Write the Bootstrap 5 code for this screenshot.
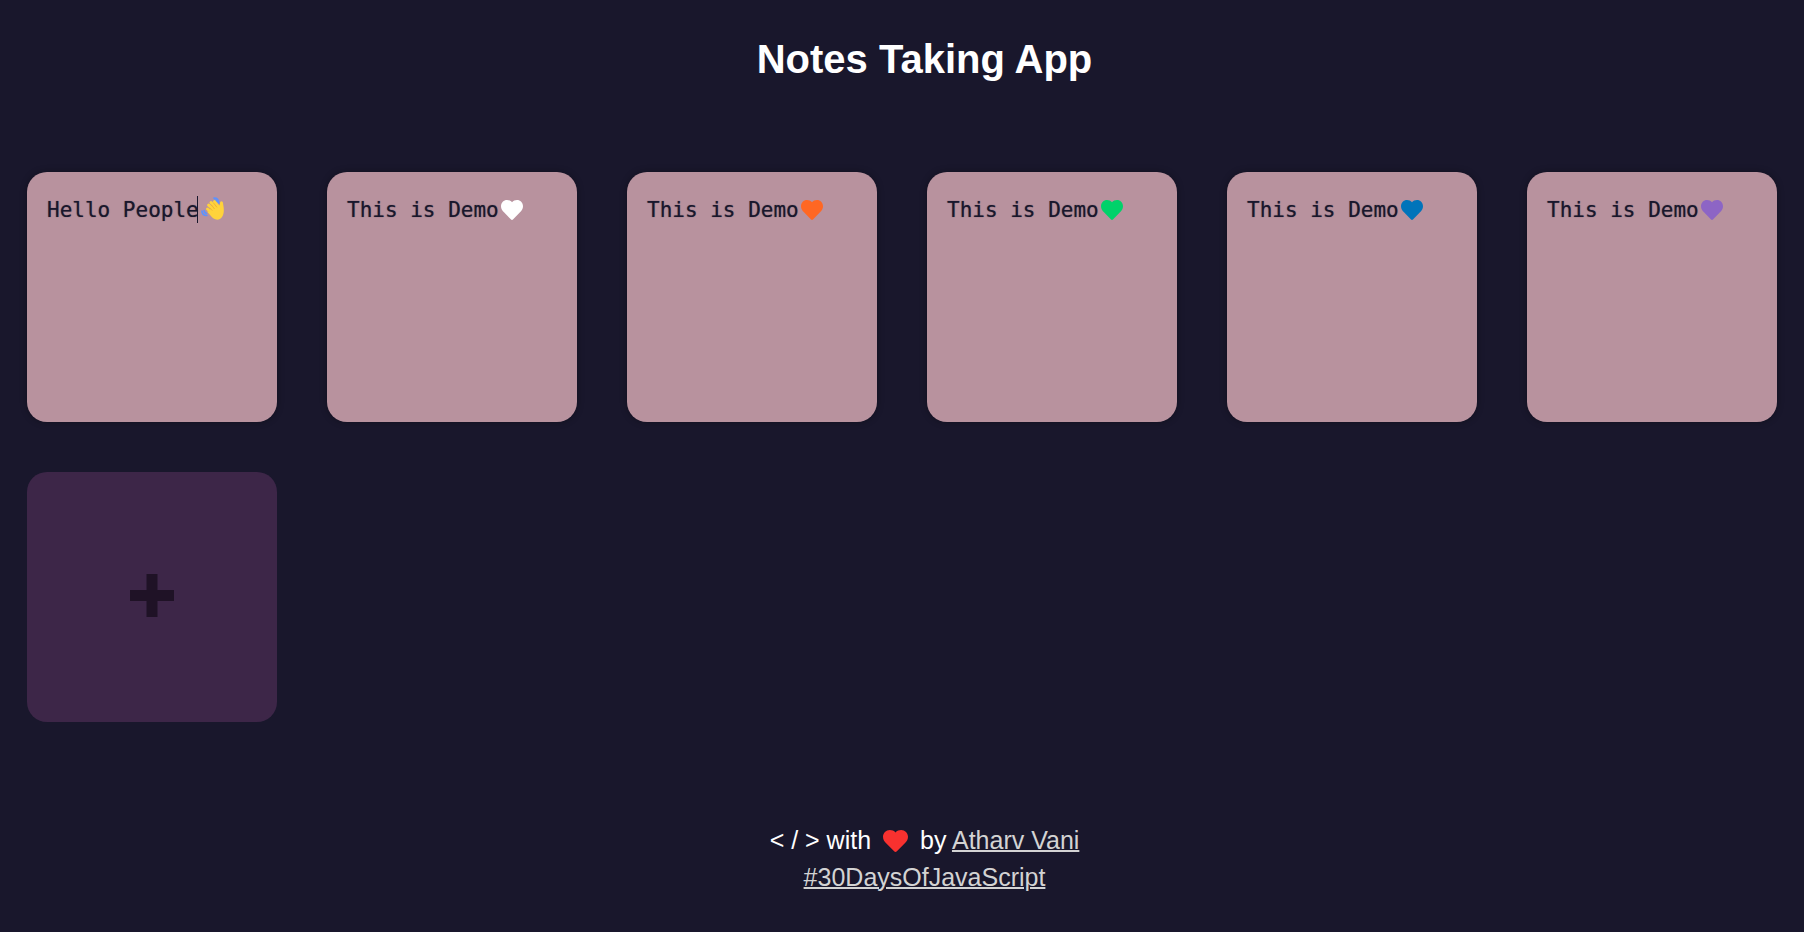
<!DOCTYPE html>
<html lang="en">
<head>
<meta charset="utf-8">
<meta name="viewport" content="width=device-width, initial-scale=1">
<title>Notes Taking App</title>
<link href="https://cdn.jsdelivr.net/npm/bootstrap@5.3.0/dist/css/bootstrap.min.css" rel="stylesheet">
<style>
  body { background: #19172c; color: #fff; font-family: "Liberation Sans", Arial, sans-serif; }
  .page-title { font-size: 40px; line-height: 46px; padding: 36px 0 0 45px; margin-bottom: 90px; }
  .notes { display: grid; grid-template-columns: repeat(auto-fill, 250px); gap: 50px; justify-content: center; }
  .note, .add-note { height: 250px; border-radius: 20px; }
  .note { background: #b8929e; box-shadow: 0 0 7px rgba(0, 0, 0, .33); }
  .note-text { background: transparent; color: #19172c; font: 21px/27px "DejaVu Sans Mono", monospace; text-shadow: 0 0 1px rgba(25, 23, 44, .6); padding: 25px 20px; resize: none; outline: 0; border-radius: 20px; }
  .emoji { left: 174px; top: 28px; pointer-events: none; }
  .wave { top: 25px; }
  .caret { left: 170px; top: 24px; width: 1px; height: 27px; background: #19172c; }
  .add-note { background: #3d2648; color: #1f1226; padding: 0 0 3px; }
  .page-footer { font-size: 25px; line-height: 37px; padding: 100px 0 32px 45px; }
  .page-footer a { color: #d3d3d3; text-decoration-thickness: 2px; }
  .love { margin: 0 5px; vertical-align: -3px; }
</style>
<script src="https://cdn.jsdelivr.net/npm/bootstrap@5.3.0/dist/js/bootstrap.bundle.min.js"></script>
</head>
<body>
<svg class="d-none" aria-hidden="true">
  <symbol id="heart" viewBox="0 0 22 20">
    <path fill="currentColor" d="M11 2.200C9.700 .700 8 0 6 0C2.700 0 0 2.700 0 6.200C0 8.700 1.200 10.500 3 12.300L9.800 19.300Q11 20.500 12.200 19.300L19 12.300C20.800 10.500 22 8.700 22 6.200C22 2.700 19.300 0 16 0C14 0 12.300 .700 11 2.200Z"/>
  </symbol>
</svg>
<header><h1 class="page-title text-center fw-bold">Notes Taking App</h1></header>
<main class="notes">
  <div class="note position-relative">
    <textarea class="note-text w-100 h-100 border-0 d-block" aria-label="Note 1" spellcheck="false">Hello People</textarea>
    <span class="caret position-absolute"></span>
    <svg class="emoji wave position-absolute" width="23" height="23" viewBox="0 0 23 23" role="img" aria-label="Waving hand">
      <g fill="none" stroke="#5c92ff" stroke-width="1.700" stroke-linecap="round">
        <path d="M13 1.200Q17.500 1 17.800 6M13.800 3.200Q15.700 3.300 16 5"/>
        <path d="M1 14Q1 18.500 5.800 18.500M3.200 13.500Q3.200 16 5.500 16.300"/>
      </g>
      <g fill="none" stroke="#ffd33b" stroke-width="3" stroke-linecap="round">
        <path d="M6.500 12L11 16M7.600 8.200L13 13M10 5.500L15 11M13.500 4.700L17.500 10"/>
      </g>
      <path fill="#ffd33b" d="M8 14.500L11 9L16 7L18.500 8.500C19.200 7.500 18.700 6 19.400 4.800C20.300 3.500 21.800 4.200 22 6C22.300 8.500 23 11 22.800 14C22.600 19 20 22.700 16.300 22.700C13.500 22.700 11.500 20.800 9.500 18.500L6 14.500Z"/>
      <path d="M8.800 11L11 13.300M10.500 8L13.300 11.700M13 6.500L15.700 10" fill="none" stroke="#eaa52f" stroke-width=".700" stroke-linecap="round"/>
    </svg>
  </div>
  <div class="note position-relative">
    <textarea class="note-text w-100 h-100 border-0 d-block" aria-label="Note 2" spellcheck="false">This is Demo</textarea>
    <svg class="emoji position-absolute" width="22" height="20" color="#ffffff"><use href="#heart"/></svg>
  </div>
  <div class="note position-relative">
    <textarea class="note-text w-100 h-100 border-0 d-block" aria-label="Note 3" spellcheck="false">This is Demo</textarea>
    <svg class="emoji position-absolute" width="22" height="20" color="#ff6723"><use href="#heart"/></svg>
  </div>
  <div class="note position-relative">
    <textarea class="note-text w-100 h-100 border-0 d-block" aria-label="Note 4" spellcheck="false">This is Demo</textarea>
    <svg class="emoji position-absolute" width="22" height="20" color="#00d26a"><use href="#heart"/></svg>
  </div>
  <div class="note position-relative">
    <textarea class="note-text w-100 h-100 border-0 d-block" aria-label="Note 5" spellcheck="false">This is Demo</textarea>
    <svg class="emoji position-absolute" width="22" height="20" color="#0074ba"><use href="#heart"/></svg>
  </div>
  <div class="note position-relative">
    <textarea class="note-text w-100 h-100 border-0 d-block" aria-label="Note 6" spellcheck="false">This is Demo</textarea>
    <svg class="emoji position-absolute" width="22" height="20" color="#8d65c5"><use href="#heart"/></svg>
  </div>
  <button type="button" class="add-note border-0 d-flex align-items-center justify-content-center" aria-label="Add note">
    <svg width="44" height="43" viewBox="0 0 44 43" aria-hidden="true"><path fill="currentColor" d="M16.500 0H27.500V16H44V27H27.500V43H16.500V27H0V16H16.500Z"/></svg>
  </button>
</main>
<footer class="page-footer text-center">
  <div>&lt; / &gt; with <svg class="love" width="25" height="22" viewBox="0 0 22 20" preserveAspectRatio="none" color="#f8312f" role="img" aria-label="love"><use href="#heart" width="22" height="20"/></svg> by <a href="#author">Atharv Vani</a></div>
  <div><a href="#challenge">#30DaysOfJavaScript</a></div>
</footer>
</body>
</html>
